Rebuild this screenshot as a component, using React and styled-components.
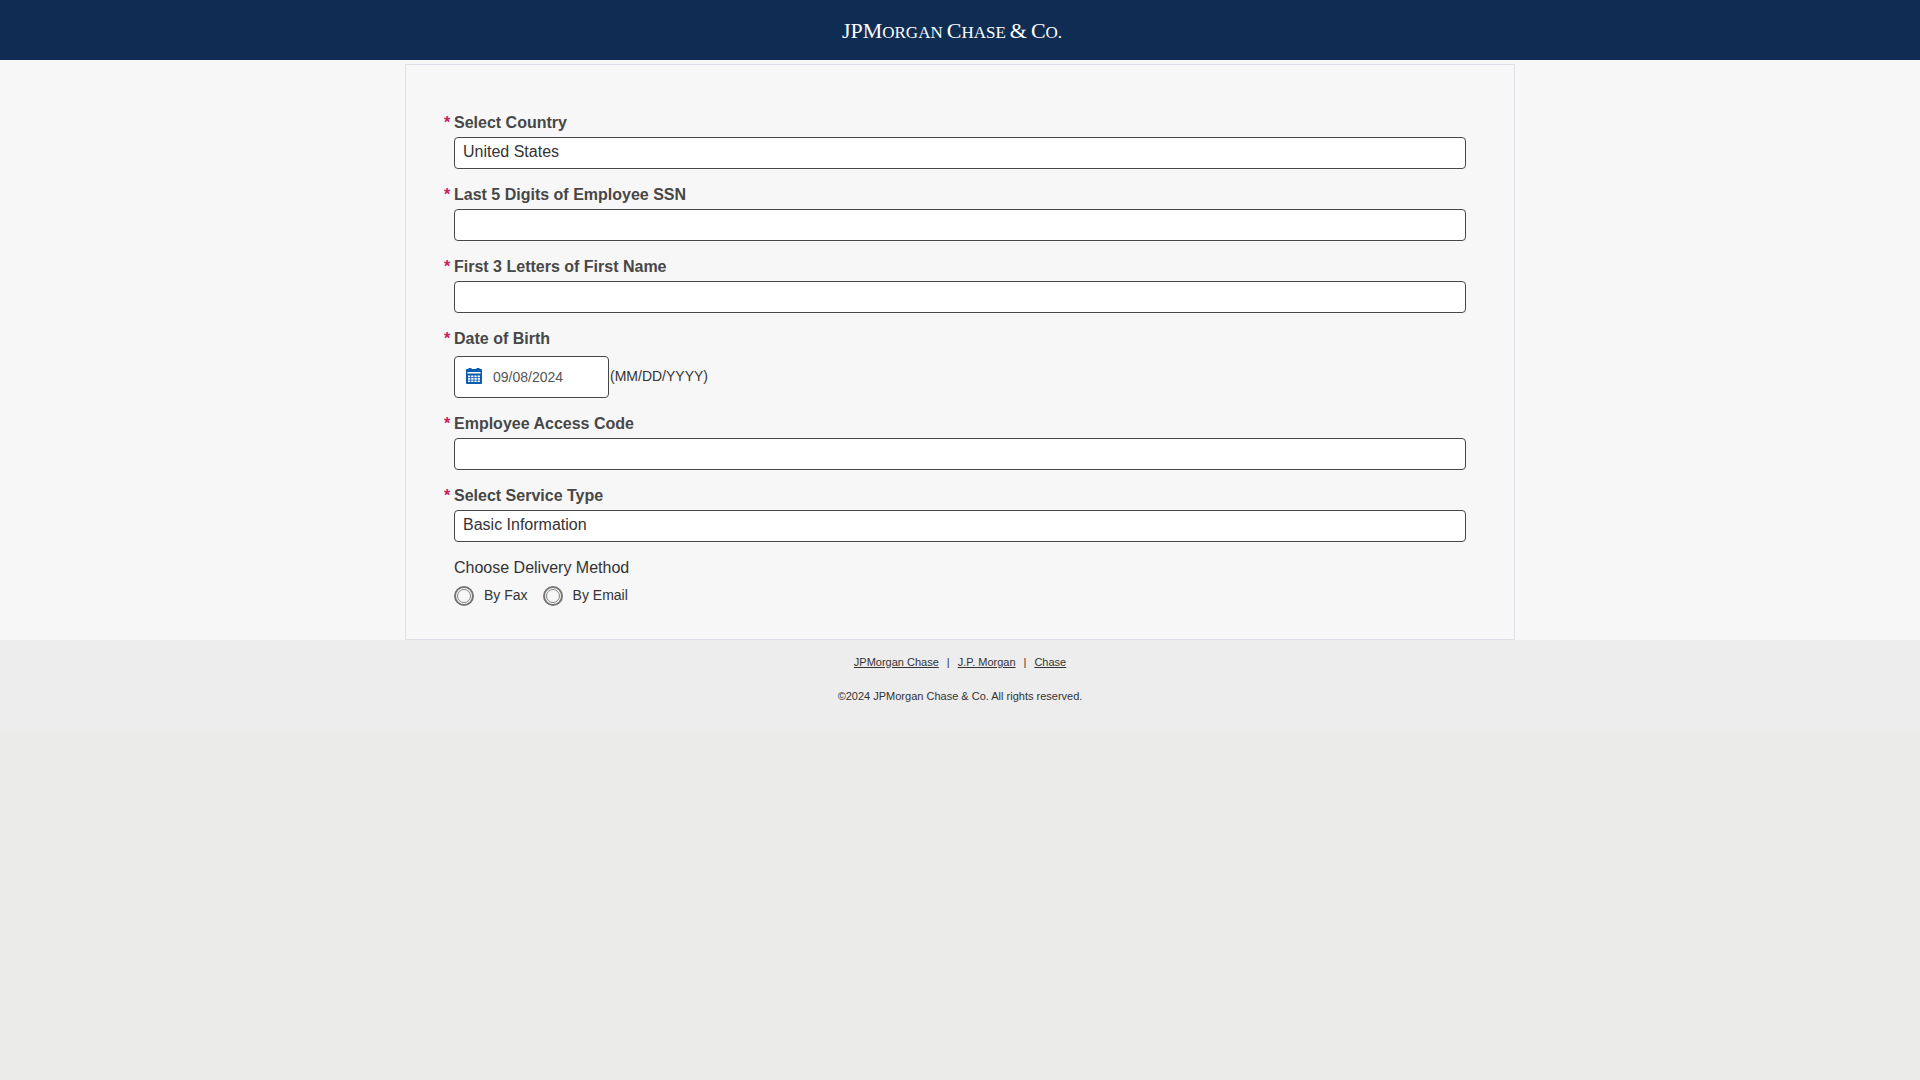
import React, { useState } from 'react';
import styled, { createGlobalStyle } from 'styled-components';

const deliveryMethods = [
  { value: 'fax', label: 'By Fax' },
  { value: 'email', label: 'By Email' },
];

const footerLinks = ['JPMorgan Chase', 'J.P. Morgan', 'Chase'];

const CalendarIcon = () => (
  <svg width="16" height="16" viewBox="0 0 16 16" aria-hidden="true">
    <path
      fill="#0b5cad"
      d="M1 1h1.5V0h3v1h5V0h3v1H15a1 1 0 0 1 1 1v13a1 1 0 0 1-1 1H1a1 1 0 0 1-1-1V2a1 1 0 0 1 1-1z"
    />
    <path
      fill="#fff"
      d="M1.5 4h13v1.5h-13zM2 7.5h2.3v1.7H2zM5.2 7.5h2.3v1.7H5.2zM8.4 7.5h2.3v1.7H8.4zM11.6 7.5h2.3v1.7h-2.3zM2 10h2.3v1.7H2zM5.2 10h2.3v1.7H5.2zM8.4 10h2.3v1.7H8.4zM11.6 10h2.3v1.7h-2.3zM2 12.5h2.3v1.5H2zM5.2 12.5h2.3v1.5H5.2zM8.4 12.5h2.3v1.5H8.4zM11.6 12.5h2.3v1.5h-2.3z"
    />
  </svg>
);

const Field = ({ id, label, children }) => (
  <FieldRow>
    <Required>*</Required>
    <Label htmlFor={id}>{label}</Label>
    <Control>{children}</Control>
  </FieldRow>
);

const App = () => {
  const [delivery, setDelivery] = useState('');

  return (
    <>
      <GlobalStyle />
      <Header>
        <Logo>
          <span>
            JPM<small>ORGAN</small>
          </span>
          <span>
            C<small>HASE</small>
          </span>
          <span>&amp;</span>
          <span>
            C<small>O.</small>
          </span>
        </Logo>
      </Header>
      <Main>
        <Card onSubmit={(e) => e.preventDefault()}>
          <Field id="country" label="Select Country">
            <Select id="country" defaultValue="US">
              <option value="US">United States</option>
            </Select>
          </Field>
          <Field id="ssn" label="Last 5 Digits of Employee SSN">
            <Input id="ssn" maxLength={5} />
          </Field>
          <Field id="firstName" label="First 3 Letters of First Name">
            <Input id="firstName" maxLength={3} />
          </Field>
          <Field id="dob" label="Date of Birth">
            <DateRow>
              <DateBox>
                <CalendarIcon />
                <DateInput id="dob" defaultValue="09/08/2024" />
              </DateBox>
              <Hint>(MM/DD/YYYY)</Hint>
            </DateRow>
          </Field>
          <Field id="accessCode" label="Employee Access Code">
            <Input id="accessCode" />
          </Field>
          <Field id="serviceType" label="Select Service Type">
            <Select id="serviceType" defaultValue="basic">
              <option value="basic">Basic Information</option>
            </Select>
          </Field>
          <Delivery>
            <Legend>Choose Delivery Method</Legend>
            <RadioRow>
              {deliveryMethods.map((method) => (
                <RadioLabel key={method.value}>
                  <Radio
                    name="delivery"
                    value={method.value}
                    checked={delivery === method.value}
                    onChange={() => setDelivery(method.value)}
                  />
                  <RadioText>{method.label}</RadioText>
                </RadioLabel>
              ))}
            </RadioRow>
          </Delivery>
        </Card>
      </Main>
      <Footer>
        <Links>
          {footerLinks.map((link, i) => (
            <React.Fragment key={link}>
              {i > 0 && <span>|</span>}
              <a href="#">{link}</a>
            </React.Fragment>
          ))}
        </Links>
        <Copyright>©2024 JPMorgan Chase &amp; Co. All rights reserved.</Copyright>
      </Footer>
    </>
  );
};

const GlobalStyle = createGlobalStyle`
  * {
    box-sizing: border-box;
  }

  body {
    margin: 0;
    background: #ebebe9;
    color: #333;
    font-family: 'Liberation Sans', Arial, sans-serif;
    font-size: 16px;
    line-height: 24px;
  }

  input,
  select {
    font: inherit;
    color: inherit;
  }
`;

const Header = styled.header`
  display: flex;
  justify-content: center;
  align-items: center;
  height: 60px;
  padding: 4px 16px 0 0;
  background: #0f2d52;
`;

const Logo = styled.div`
  display: flex;
  gap: 4px;
  color: #fff;
  font-family: 'Liberation Serif', 'Times New Roman', serif;
  font-size: 22px;
  white-space: nowrap;

  small {
    font-size: 17px;
  }
`;

const Main = styled.main`
  padding-top: 4px;
  background: #f7f7f7;
`;

const Card = styled.form`
  max-width: 1110px;
  margin: 0 auto;
  padding: 46px 48px 33px 38px;
  border: 1px solid #dedee6;
`;

const FieldRow = styled.div`
  display: grid;
  grid-template-columns: 10px 1fr;
  margin-bottom: 14px;
`;

const Required = styled.span`
  color: #c8205c;
  font-weight: bold;
`;

const Label = styled.label`
  color: #474747;
  font-weight: bold;
`;

const Control = styled.div`
  grid-column: 2;
  margin-top: 2px;
`;

const Input = styled.input`
  display: block;
  width: 100%;
  height: 32px;
  padding: 0 8px 2px;
  background: #fff;
  border: 1px solid #474747;
  border-radius: 4px;
`;

const Select = styled(Input).attrs({ as: 'select' })`
  appearance: none;
`;

const DateRow = styled.div`
  display: flex;
  align-items: center;
  gap: 1px;
  padding-top: 3px;
  font-size: 14px;
`;

const DateBox = styled.div`
  display: flex;
  align-items: center;
  gap: 11px;
  width: 155px;
  height: 42px;
  padding: 0 11px;
  background: #fff;
  border: 1px solid #474747;
  border-radius: 4px;

  svg {
    flex: none;
    margin-bottom: 2px;
  }
`;

const DateInput = styled.input`
  width: 100%;
  min-width: 0;
  padding: 0;
  border: 0;
  background: none;
  color: #555;
  outline: none;
`;

const Hint = styled.span`
  padding-bottom: 2px;
`;

const Delivery = styled.fieldset`
  margin: 0 0 0 10px;
  padding: 0;
  border: 0;
`;

const Legend = styled.legend`
  padding: 0;
`;

const RadioRow = styled.div`
  display: flex;
  gap: 15px;
  padding-top: 6px;
`;

const RadioLabel = styled.label`
  display: flex;
  align-items: center;
  gap: 10px;
  font-size: 14px;
`;

const RadioText = styled.span`
  padding-bottom: 2px;
  line-height: 18px;
`;

const Radio = styled.input.attrs({ type: 'radio' })`
  appearance: none;
  display: grid;
  place-items: center;
  width: 20px;
  height: 20px;
  margin: 0;
  border: 2px solid #767676;
  border-radius: 50%;

  &::before {
    content: '';
    width: 12px;
    height: 12px;
    border: 1px solid #858585;
    border-radius: 50%;
  }

  &:checked::before {
    background: #0b5cad;
  }
`;

const Footer = styled.footer`
  padding: 10px 0 24px;
  background: #ededed;
  font-size: 11px;
  text-align: center;
`;

const Links = styled.nav`
  display: flex;
  justify-content: center;
  gap: 8px;

  a {
    color: inherit;
  }
`;

const Copyright = styled.p`
  margin: 10px 0 0;
`;

export default App;
